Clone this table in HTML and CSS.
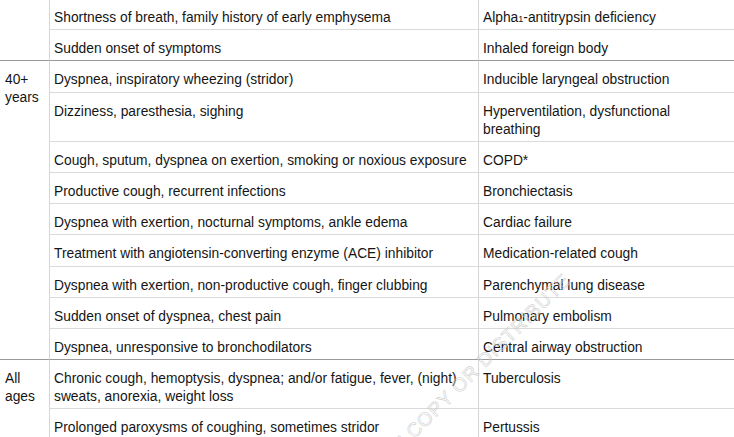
FILE: index.html
```html
<!DOCTYPE html>
<html lang="en">
<head>
<meta charset="utf-8">
<title>Differential diagnosis</title>
<link rel="stylesheet" href="styles.css">
</head>
<body>
<div class="page">
  <table class="dx">
    <colgroup>
      <col class="c-age">
      <col class="c-sym">
      <col class="c-cond">
    </colgroup>
    <tbody>
      <tr>
        <td class="age group-end" rowspan="2"></td>
        <td class="sym">Shortness of breath, family history of early emphysema</td>
        <td class="cond">Alpha<sub class="sub">1</sub>-antitrypsin deficiency</td>
      </tr>
      <tr class="group-end">
        <td class="sym">Sudden onset of symptoms</td>
        <td class="cond">Inhaled foreign body</td>
      </tr>
      <tr>
        <td class="age group-end" rowspan="9">40+ years</td>
        <td class="sym">Dyspnea, inspiratory wheezing (stridor)</td>
        <td class="cond">Inducible laryngeal obstruction</td>
      </tr>
      <tr>
        <td class="sym">Dizziness, paresthesia, sighing</td>
        <td class="cond">Hyperventilation, dysfunctional breathing</td>
      </tr>
      <tr>
        <td class="sym">Cough, sputum, dyspnea on exertion, smoking or noxious exposure</td>
        <td class="cond">COPD*</td>
      </tr>
      <tr>
        <td class="sym">Productive cough, recurrent infections</td>
        <td class="cond">Bronchiectasis</td>
      </tr>
      <tr>
        <td class="sym">Dyspnea with exertion, nocturnal symptoms, ankle edema</td>
        <td class="cond">Cardiac failure</td>
      </tr>
      <tr>
        <td class="sym">Treatment with angiotensin-converting enzyme (ACE) inhibitor</td>
        <td class="cond">Medication-related cough</td>
      </tr>
      <tr>
        <td class="sym">Dyspnea with exertion, non-productive cough, finger clubbing</td>
        <td class="cond">Parenchymal lung disease</td>
      </tr>
      <tr>
        <td class="sym">Sudden onset of dyspnea, chest pain</td>
        <td class="cond">Pulmonary embolism</td>
      </tr>
      <tr class="group-end">
        <td class="sym">Dyspnea, unresponsive to bronchodilators</td>
        <td class="cond">Central airway obstruction</td>
      </tr>
      <tr>
        <td class="age" rowspan="2">All ages</td>
        <td class="sym">Chronic cough, hemoptysis, dyspnea; and/or fatigue, fever, (night) sweats, anorexia, weight loss</td>
        <td class="cond">Tuberculosis</td>
      </tr>
      <tr>
        <td class="sym">Prolonged paroxysms of coughing, sometimes stridor</td>
        <td class="cond">Pertussis</td>
      </tr>
    </tbody>
  </table>
  <div class="watermark">COPYRIGHTED MATERIAL - DO NOT COPY OR DISTRIBUTE</div>
</div>
</body>
</html>
```
FILE: styles.css
```css
html, body {
  margin: 0;
  padding: 0;
  background: #ffffff;
}

body {
  width: 734px;
  height: 437px;
  overflow: hidden;
}

.page {
  position: relative;
  width: 734px;
  height: 437px;
  overflow: hidden;
}

.dx {
  width: 734px;
  table-layout: fixed;
  border-collapse: separate;
  border-spacing: 0;
  margin-top: -1px;
  font-family: "Liberation Sans", Arial, sans-serif;
  font-size: 13.8px;
  line-height: 18px;
  color: #151515;
}

.c-age { width: 49px; }
.c-sym { width: 429px; }
.c-cond { width: 256px; }

.dx td {
  vertical-align: top;
  padding: 10px 4px 2.2px 4px;
  border-bottom: 1px solid #dadada;
  text-align: left;
}

.dx td.age {
  padding-left: 5px;
}

.dx td.sym,
.dx td.cond {
  border-left: 1px solid #d6d6d6;
}

.dx td.sym {
  padding-left: 4px;
}

.dx tr.group-end td,
.dx td.age.group-end {
  border-bottom-color: #9a9a9a;
}

.sub {
  font-size: 9px;
  vertical-align: baseline;
  line-height: 0;
}

.watermark {
  position: absolute;
  right: 166px;
  top: 266px;
  transform: rotate(-45deg);
  transform-origin: 100% 50%;
  white-space: nowrap;
  font-family: "Liberation Sans", Arial, sans-serif;
  font-size: 19px;
  letter-spacing: 1px;
  color: transparent;
  -webkit-text-stroke: 0.6px #cfcfcf;
  pointer-events: none;
}
```
